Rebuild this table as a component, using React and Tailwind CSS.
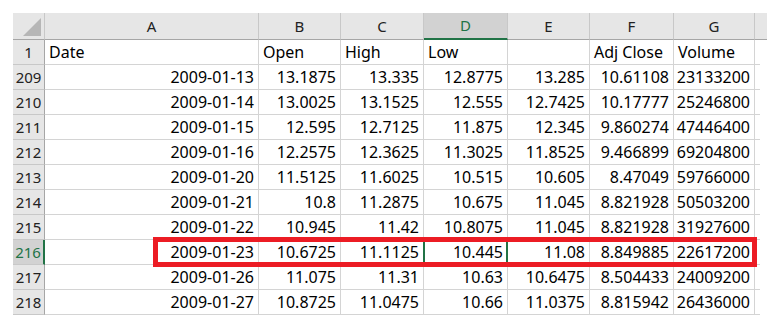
import React from 'react';

const cols = [
  { key: 'A', w: 'w-[214px]' },
  { key: 'B', w: 'w-[82px]' },
  { key: 'C', w: 'w-[83px]' },
  { key: 'D', w: 'w-[84px]' },
  { key: 'E', w: 'w-[82px]' },
  { key: 'F', w: 'w-[84px]' },
  { key: 'G', w: 'w-[81px]' },
];

const rows = [
  ['209', '2009-01-13', '13.1875', '13.335', '12.8775', '13.285', '10.61108', '23133200'],
  ['210', '2009-01-14', '13.0025', '13.1525', '12.555', '12.7425', '10.17777', '25246800'],
  ['211', '2009-01-15', '12.595', '12.7125', '11.875', '12.345', '9.860274', '47446400'],
  ['212', '2009-01-16', '12.2575', '12.3625', '11.3025', '11.8525', '9.466899', '69204800'],
  ['213', '2009-01-20', '11.5125', '11.6025', '10.515', '10.605', '8.47049', '59766000'],
  ['214', '2009-01-21', '10.8', '11.2875', '10.675', '11.045', '8.821928', '50503200'],
  ['215', '2009-01-22', '10.945', '11.42', '10.8075', '11.045', '8.821928', '31927600'],
  ['216', '2009-01-23', '10.6725', '11.1125', '10.445', '11.08', '8.849885', '22617200'],
  ['217', '2009-01-26', '11.075', '11.31', '10.63', '10.6475', '8.504433', '24009200'],
  ['218', '2009-01-27', '10.8725', '11.0475', '10.66', '11.0375', '8.815942', '26436000'],
];

const titles = ['Date', 'Open', 'High', 'Low', '', 'Adj Close', 'Volume'];

export default function App() {
  return (
    <div
      className="relative w-[767px] h-[327px] bg-white pt-[13px] pl-[13px] overflow-hidden text-black"
      style={{ fontFamily: '"Noto Sans", "Liberation Sans", sans-serif' }}
    >
      {/* Column headers */}
      <div className="flex h-[27px]">
        <div className="relative w-[32px] h-full bg-[#e6e6e6] border-r border-b border-r-[#c8c8c8] border-b-[#a6a6a6]">
          <svg className="absolute left-[10px] top-[5px]" width="18" height="18" viewBox="0 0 18 18">
            <polygon points="18,0 18,18 0,18" fill="#b6b6b6" />
          </svg>
        </div>
        {cols.map((c) => (
          <div
            key={c.key}
            className={`${c.w} h-full flex items-center justify-center text-[15px] border-r border-r-[#c8c8c8] ${
              c.key === 'D'
                ? 'bg-[#d2d2d2] text-[#217346] border-b-2 border-b-[#217346]'
                : 'bg-[#e6e6e6] text-[#222] border-b border-b-[#a6a6a6]'
            }`}
          >
            {c.key}
          </div>
        ))}
        <div className="flex-1 h-full bg-[#e6e6e6] border-b border-b-[#a6a6a6]" />
      </div>

      {/* Row 1 */}
      <div className="flex h-[25px] w-[747px]">
        <div className="w-[32px] h-full bg-[#e6e6e6] border-r border-b border-r-[#a6a6a6] border-b-[#c8c8c8] flex items-center justify-center text-[15px] text-[#222]">
          1
        </div>
        {cols.map((c, i) => (
          <div
            key={c.key}
            className={`${c.w} h-full border-r border-b border-[#d4d4d4] flex items-center px-[4px] text-[16px] leading-none whitespace-nowrap`}
          >
            {titles[i]}
          </div>
        ))}
        <div className="flex-1 h-full border-b border-[#d4d4d4]" />
      </div>

      {/* Data rows */}
      {rows.map((r) => {
        const sel = r[0] === '216';
        return (
          <div key={r[0]} className="flex h-[25px] w-[747px]">
            <div
              className={`w-[32px] h-full border-b border-b-[#c8c8c8] flex items-center justify-center text-[15px] ${
                sel
                  ? 'bg-[#d2d2d2] text-[#217346] border-r-2 border-r-[#217346]'
                  : 'bg-[#e6e6e6] text-[#222] border-r border-r-[#a6a6a6]'
              }`}
            >
              {r[0]}
            </div>
            {cols.map((c, i) => (
              <div
                key={c.key}
                className={`relative ${c.w} h-full border-r border-b border-[#d4d4d4] flex items-center justify-end px-[4px] text-[16px] leading-none whitespace-nowrap`}
              >
                {r[i + 1]}
                {sel && c.key === 'D' && (
                  <div className="absolute -left-px -right-px -top-px -bottom-px border-2 border-[#217346]" />
                )}
              </div>
            ))}
            <div className="flex-1 h-full border-b border-[#d4d4d4]" />
          </div>
        );
      })}

      {/* Red highlight annotation */}
      <div className="absolute left-[153px] top-[237px] w-[604px] h-[30px] border-[5px] border-[#ec1c24] z-10" />
    </div>
  );
}
